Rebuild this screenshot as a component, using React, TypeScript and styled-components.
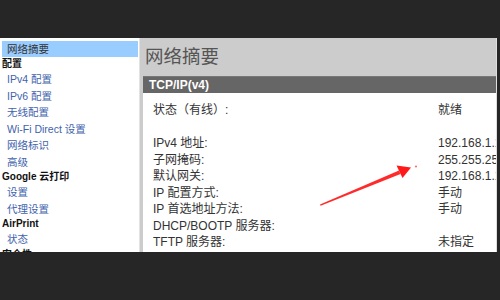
import React from "react";
import styled, { createGlobalStyle } from "styled-components";

const GlobalStyle = createGlobalStyle`
  html, body { margin: 0; padding: 0; background: #262626; }
  body { font-family: "Liberation Sans", Arial, "Noto Sans CJK SC", sans-serif; }
  * { box-sizing: border-box; }
`;

const Root = styled.div`
  position: relative;
  width: 500px;
  height: 300px;
  padding-top: 38px;
  overflow: hidden;
`;

const Frame = styled.div`
  display: flex;
  width: 497px;
  height: 214px;
  background: #cccccc;
  overflow: hidden;
`;

const Sidebar = styled.nav`
  width: 140px;
  flex: none;
  background: #ffffff;
  border-right: 1px solid #e2e2e2;
  padding-top: 3px;
  display: flex;
  flex-direction: column;
  white-space: nowrap;
`;

type NavKind = "selected" | "header" | "link";

const NavItem = styled.div<{ $kind: NavKind }>`
  font-family: "Liberation Sans", Arial, "Noto Sans CJK SC", sans-serif;
  font-size: ${(p) => (p.$kind === "header" ? "10px" : "10.5px")};
  font-weight: ${(p) => (p.$kind === "header" ? 700 : 400)};
  height: ${(p) => (p.$kind === "header" ? "14px" : p.$kind === "selected" ? "16px" : "16.5px")};
  line-height: ${(p) => (p.$kind === "header" ? "14px" : p.$kind === "selected" ? "16px" : "16.5px")};
  padding-left: ${(p) => (p.$kind === "header" ? "2px" : p.$kind === "selected" ? "5px" : "7px")};
  margin: ${(p) => (p.$kind === "selected" ? "0 1px 0 2px" : "0")};
  background: ${(p) => (p.$kind === "selected" ? "#99ccff" : "transparent")};
  color: ${(p) => (p.$kind === "header" ? "#111111" : p.$kind === "selected" ? "#333333" : "#4263ad")};
`;

const Main = styled.section`
  flex: 1;
  min-width: 0;
  display: flex;
  flex-direction: column;
  padding-left: 3px;
  border-right: 1px solid #dedede;
  overflow: hidden;
`;

const Heading = styled.h1`
  margin: 0;
  height: 38px;
  line-height: 38px;
  padding-left: 2px;
  font-size: 18.5px;
  font-weight: 400;
  color: #555555;
  white-space: nowrap;
`;

const SectionBar = styled.div`
  height: 17px;
  line-height: 17px;
  background: #666666;
  border-top: 1px solid #777777;
  color: #ffffff;
  font-size: 12px;
  font-weight: 700;
  padding-left: 6px;
`;

const Body = styled.div`
  flex: 1;
  background: #ffffff;
  padding: 9px 0 0 10px;
  display: grid;
  grid-template-columns: 285px 1fr;
  grid-auto-rows: 16.5px;
  font-size: 12px;
  line-height: 16.5px;
  color: #333333;
  white-space: nowrap;
  overflow: hidden;
`;

const Cell = styled.div`
  overflow: hidden;
`;

const ArrowLayer = styled.svg`
  position: absolute;
  left: 0;
  top: 0;
  pointer-events: none;
`;

const nav: [NavKind, string][] = [
  ["selected", "网络摘要"],
  ["header", "配置"],
  ["link", "IPv4 配置"],
  ["link", "IPv6 配置"],
  ["link", "无线配置"],
  ["link", "Wi-Fi Direct 设置"],
  ["link", "网络标识"],
  ["link", "高级"],
  ["header", "Google 云打印"],
  ["link", "设置"],
  ["link", "代理设置"],
  ["header", "AirPrint"],
  ["link", "状态"],
  ["header", "安全性"],
];

const rows: [string, string][] = [
  ["状态（有线）:", "就绪"],
  ["", ""],
  ["IPv4 地址:", "192.168.1.100"],
  ["子网掩码:", "255.255.255.0"],
  ["默认网关:", "192.168.1.1"],
  ["IP 配置方式:", "手动"],
  ["IP 首选地址方法:", "手动"],
  ["DHCP/BOOTP 服务器:", ""],
  ["TFTP 服务器:", "未指定"],
];

export default function App() {
  return (
    <>
      <GlobalStyle />
      <Root>
        <Frame>
          <Sidebar>
            {nav.map(([kind, text], i) => (
              <NavItem key={i} $kind={kind}>
                {text}
              </NavItem>
            ))}
          </Sidebar>
          <Main>
            <Heading>网络摘要</Heading>
            <SectionBar>TCP/IP(v4)</SectionBar>
            <Body>
              {rows.map(([label, value], i) => (
                <React.Fragment key={i}>
                  <Cell>{label}</Cell>
                  <Cell>{value}</Cell>
                </React.Fragment>
              ))}
            </Body>
          </Main>
        </Frame>
        <ArrowLayer width="500" height="300" viewBox="0 0 500 300">
          <polygon points="320,204.5 320.6,205.8 400.5,174 399,170.6" fill="#ff2020" opacity="0.95" />
          <polygon points="411,167.5 396.5,165.5 402.5,178" fill="#ff1a1a" />
          <circle cx="416" cy="166.5" r="1" fill="#ff6060" />
        </ArrowLayer>
      </Root>
    </>
  );
}
